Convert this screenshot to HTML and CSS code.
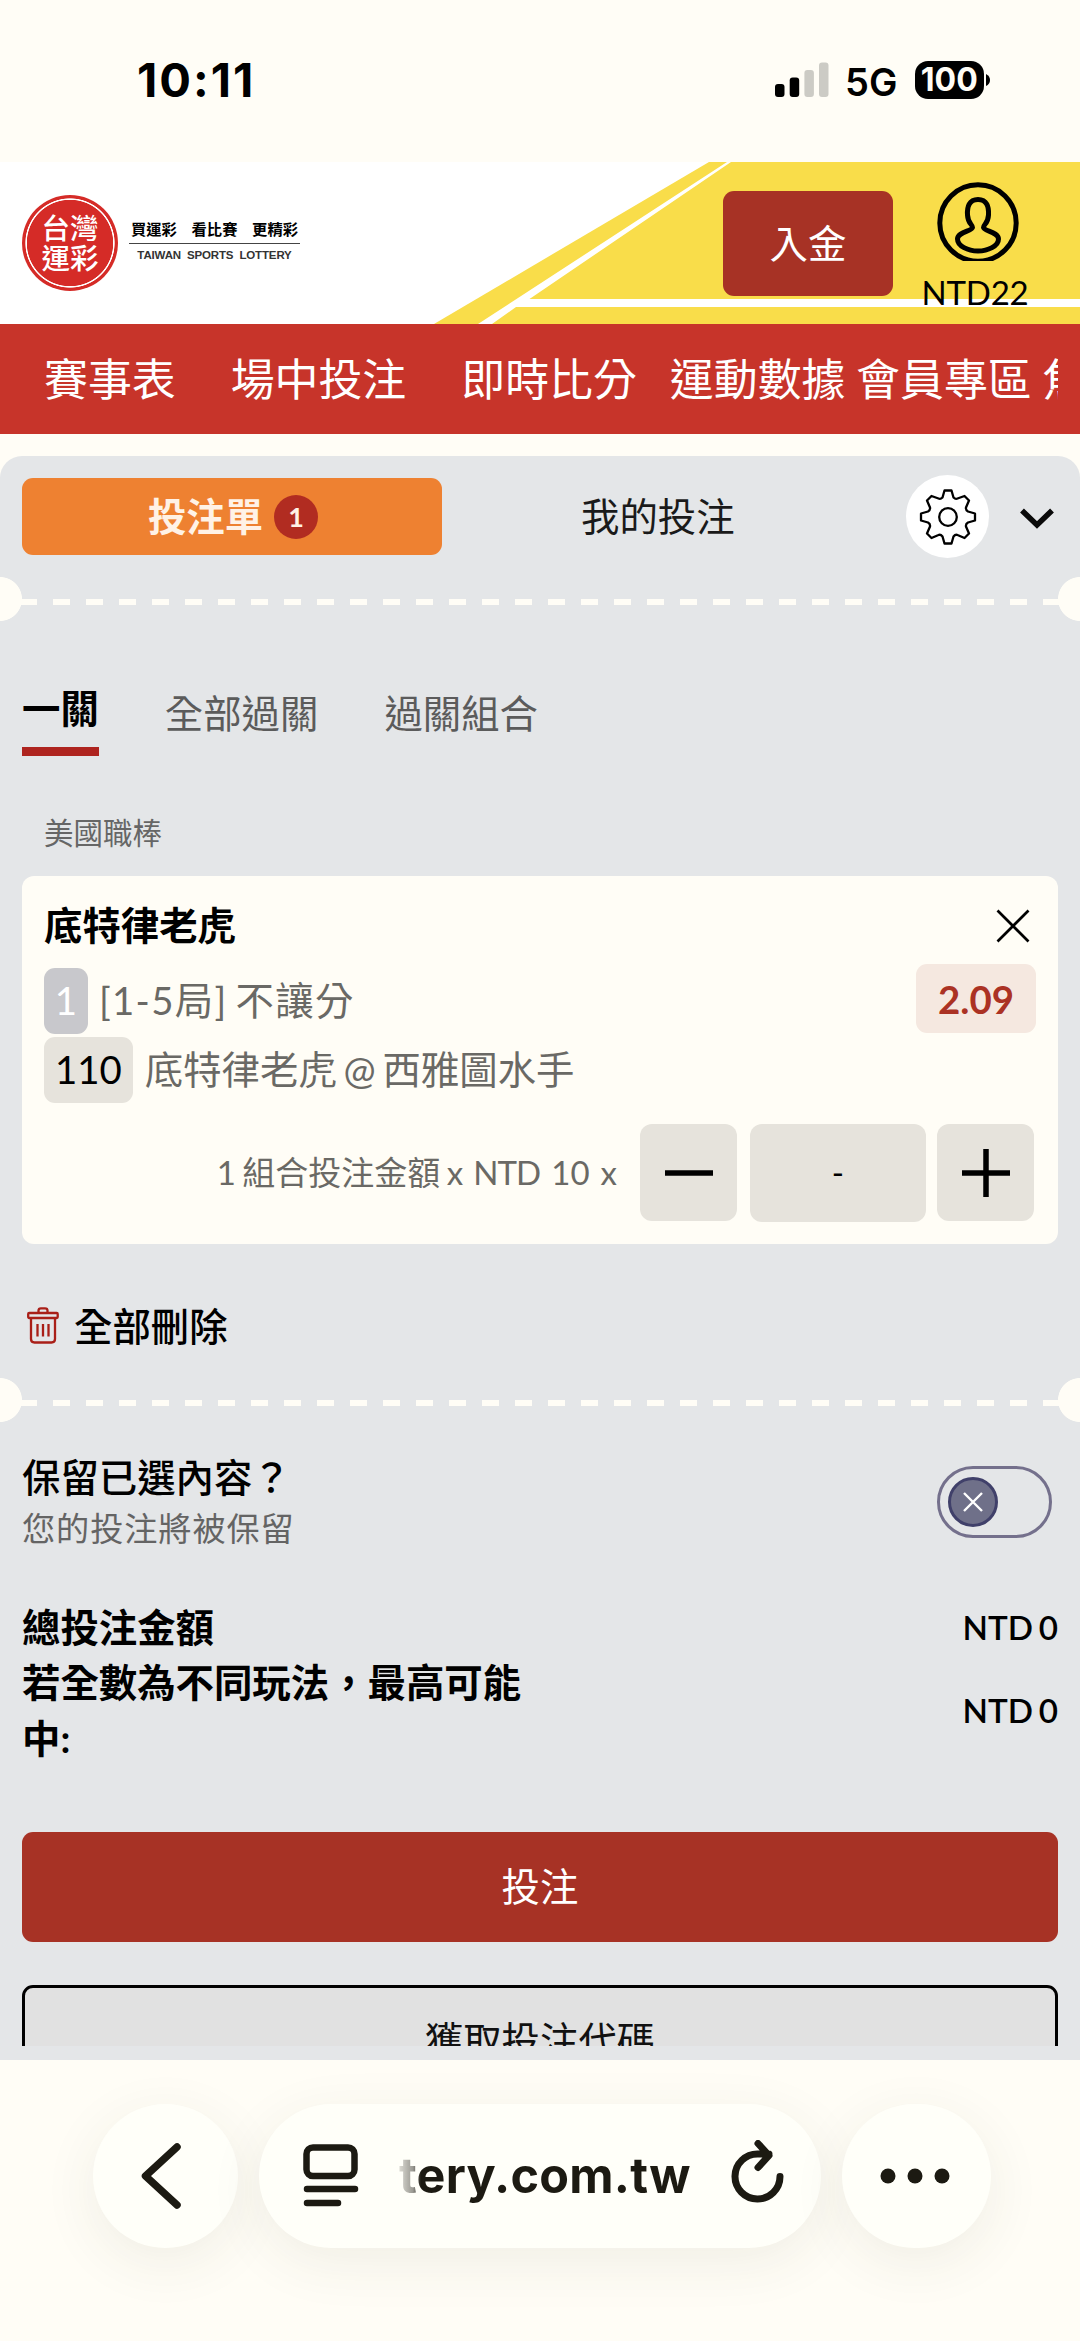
FILE: index.html
```html
<!DOCTYPE html>
<html lang="zh-Hant-TW">
<head>
<meta charset="utf-8">
<title>台灣運彩 投注單</title>
<link rel="stylesheet" href="styles.css">
</head>
<body>
<div class="phone">
  <div class="status">
    <span class="clock">10:11</span>
    <div class="status-right">
      <svg class="signal" width="54" height="36" viewBox="0 0 54 36"><rect x="0" y="22" width="9.5" height="13" rx="3"/><rect x="14.7" y="15.5" width="9.5" height="19.5" rx="3"/><g fill="#cccbc5"><rect x="29.4" y="8" width="9.5" height="27" rx="3"/><rect x="44" y="0.5" width="9.5" height="34.5" rx="3"/></g></svg>
      <span class="net">5G</span>
      <div class="battery"><span class="level">100</span><svg class="nub" width="4" height="12" viewBox="0 0 4 12"><path d="M0 0Q4 2 4 6T0 12Z"/></svg></div>
    </div>
  </div>

  <header class="header">
    <svg class="header-bg" width="1080" height="162" viewBox="0 0 1080 162"><path fill="#f9dd4a" d="M709 0H1080V162H434Z"/><path fill="#fff" d="M727 0H731L529.5 137H1080V145H516L492 162H478Z"/></svg>
    <div class="logo">
      <div class="seal"><span>台灣</span><span>運彩</span></div>
      <div class="slogan"><p class="slogan-zh"><span>買運彩</span><span>看比賽</span><span>更精彩</span></p><p class="slogan-en">TAIWAN SPORTS LOTTERY</p></div>
    </div>
    <button class="deposit">入金</button>
    <div class="account">
      <svg width="82" height="80" viewBox="0 0 82 80" fill="none" stroke="#000" stroke-width="5"><circle cx="41" cy="42" r="38.2"/><path d="M41 18.5C32 18.5 30 26 30.5 34C31 43 35.500 43 35.500 46.500C35.500 50 20.500 51 20.500 58C20.500 65 31 70 41 70S61.500 65 61.500 58C61.500 51 46.500 50 46.500 46.500C46.500 43 51 43 51.500 34C52 26 50 18.5 41 18.5Z"/></svg>
      <span>NTD22</span>
    </div>
  </header>

  <nav class="nav"><a class="wide">賽事表</a><a class="wide">場中投注</a><a class="mid">即時比分</a><a>運動數據</a><a>會員專區</a><a>焦點賽事</a></nav>

  <main class="slip">
    <div class="slip-head">
      <div class="tab-on"><span class="tab-name">投注單</span><span class="count">1</span></div>
      <div class="tab-off">我的投注</div>
      <div class="gear"><svg width="58" height="58" viewBox="-29 -29 58 58" fill="none" stroke="#000" stroke-width="2.3" stroke-linejoin="round"><circle r="8.800"/><path d="M-3.500-26.500H3.500L5.500-19.500Q7.500-17.500 9.500-18.500L16.500-21L21-16.500L18-9.500Q17.500-7 20-5.500L27-3.500V3.500L20 5.500Q17.500 7 18 9.500L21 16.500L16.500 21L9.500 18Q7.500 17 5.500 19.500L3.500 26.500H-3.500L-5.500 19.500Q-7.500 17 -9.500 18L-16.500 21L-21 16.500L-18 9.500Q-17.500 7-20 5.500L-27 3.500V-3.500L-20-5.500Q-17.500-7-18-9.500L-21-16.500L-16.500-21L-9.500-18.500Q-7.500-17.500-5.500-19.500Z"/></svg></div>
      <svg class="fold" width="34" height="22" viewBox="0 0 34 22"><path d="M2 2.500L17 17L32 2.500" fill="none" stroke="#0a0a0a" stroke-width="5.500"/></svg>
    </div>

    <div class="perforation"></div>

    <div class="modes"><div class="mode current">一關</div><div class="mode">全部過關</div><div class="mode">過關組合</div></div>
    <div class="league">美國職棒</div>

    <section class="card">
      <div class="info">
        <div class="picks">
          <div class="pick">底特律老虎</div>
          <div class="line"><span class="tag muted">1</span><span class="market">[1-5局] 不讓分</span></div>
          <div class="line"><span class="tag">110</span><span>底特律老虎 @ 西雅圖水手</span></div>
        </div>
        <div class="side">
          <svg class="close" width="34" height="34" viewBox="0 0 34 34"><path d="M1.500 1.500L32.500 32.500M32.500 1.500L1.500 32.500" stroke="#000" stroke-width="2.700"/></svg>
          <div class="odds">2.09</div>
        </div>
      </div>
      <div class="stake">
        <div class="stake-text"><span>1 組合投注金額 x</span><span class="ntd">NTD</span><span>10</span><span>x</span></div>
        <button class="step"><svg width="50" height="50" viewBox="0 0 50 50"><path d="M1 25H49" stroke="#000" stroke-width="5.500"/></svg></button>
        <div class="amount">-</div>
        <button class="step"><svg width="50" height="50" viewBox="0 0 50 50"><path d="M1 25H49M25 1V49" stroke="#000" stroke-width="5.500"/></svg></button>
      </div>
    </section>

    <div class="clear">
      <svg width="32" height="37" viewBox="0 0 32 37" fill="none" stroke="#a91f18" stroke-width="2.300"><rect x="1.200" y="6" width="29.500" height="5" rx="1"/><path d="M11.500 6V3.500Q11.500 1.300 14 1.300H18Q20.500 1.300 20.500 3.500V6M4 11V32Q4 35.500 7.500 35.500H24.500Q28 35.500 28 32V11M10.500 17V29.500M16 17V29.500M21.500 17V29.500"/></svg>
      <span>全部刪除</span>
    </div>

    <div class="perforation"></div>

    <div class="keep">
      <div><div class="keep-title">保留已選內容？</div><div class="keep-note">您的投注將被保留</div></div>
      <div class="switch"><div class="knob"><svg width="20" height="20" viewBox="0 0 20 20"><path d="M1 1L19 19M19 1L1 19" stroke="#fff" stroke-width="2.400"/></svg></div></div>
    </div>

    <div class="total"><div class="label">總投注金額</div><div class="sum">NTD 0</div></div>
    <div class="total"><div class="label">若全數為不同玩法，最高可能中:</div><div class="sum">NTD 0</div></div>

    <button class="place">投注</button>
    <div class="code-clip"><button class="code">獲取投注代碼</button></div>
  </main>

  <footer class="browser">
    <div class="pill back"><svg width="40" height="66" viewBox="0 0 40 66"><path d="M36 4L4.500 33L36 62" fill="none" stroke="#1c1a12" stroke-width="7.500" stroke-linecap="round" stroke-linejoin="round"/></svg></div>
    <div class="pill address">
      <svg class="page" width="56" height="64" viewBox="0 0 56 64" fill="none" stroke="#1c1a12" stroke-width="6.500" stroke-linecap="round"><rect x="3.500" y="3.500" width="48" height="28.500" rx="6.500"/><path d="M4 45H52M4 59H35"/></svg>
      <span class="url">tery.com.tw</span>
      <svg class="reload" width="54" height="64" viewBox="0 0 54 64" fill="none" stroke="#1c1a12" stroke-width="7" stroke-linecap="round" stroke-linejoin="round"><path d="M49 36.500A22.500 22.500 0 1 1 27 14H38M27 3.500L38 15.500L27 27.500"/></svg>
    </div>
    <div class="pill more"><svg width="70" height="16" viewBox="0 0 70 16" fill="#1c1a12"><circle cx="8" cy="8" r="7.500"/><circle cx="35" cy="8" r="7.500"/><circle cx="62" cy="8" r="7.500"/></svg></div>
  </footer>
</div>
</body>
</html>
```
FILE: styles.css
```css
* { box-sizing: border-box; }
body { margin: 0; background: #fffdf6; color: #000; font-family: Lato, "Noto Sans CJK TC", sans-serif; font-size: 38.400px; }
p { margin: 0; }
svg { display: block; flex: none; }
button { border: 0; padding: 0; font: inherit; }
.phone { width: 1080px; height: 2341px; overflow: hidden; display: flex; flex-direction: column; background: #fffdf6; white-space: nowrap; }

.status { height: 162px; display: flex; justify-content: space-between; padding: 50px 90px 0 137px; font-family: Inter, sans-serif; line-height: 60px; }
.clock { font-size: 47px; font-weight: 700; letter-spacing: 2px; }
.status-right { display: flex; height: 60px; align-items: center; }
.net { font-size: 38px; font-weight: 600; margin-left: 16px; width: 69.500px; padding-top: 4px; }
.battery { display: flex; align-items: center; gap: 2px; }
.level { width: 69.500px; height: 38px; border-radius: 13px; background: #000; color: #fffdf6; font-size: 32px; line-height: 38px; font-weight: 700; text-align: center; }

.header { position: relative; height: 162px; background: #fff; display: flex; align-items: flex-start; }
.header-bg { position: absolute; left: 0; top: 0; }
.logo { position: relative; display: flex; padding: 33px 0 0 22px; width: 723px; }
.seal { width: 96px; height: 96px; border-radius: 50%; background: radial-gradient(circle, #d52b27 42.800px, #fff 43.500px, #fff 44.300px, #d52b27 45px); color: #fff; display: flex; flex-direction: column; align-items: center; justify-content: center; font-size: 28.500px; line-height: 30px; font-weight: 500; }
.slogan { margin: 24px 0 0 11px; width: 171px; }
.slogan-zh { display: flex; justify-content: space-between; padding: 0 2px; height: 25px; border-bottom: 1.500px solid #444; font-size: 15.300px; line-height: 20px; font-weight: 700; }
.slogan-en { font: bold 11.500px/22px "Liberation Sans", sans-serif; color: #333; text-align: center; word-spacing: 3px; letter-spacing: -0.150px; }
.deposit { position: relative; width: 170px; height: 105px; margin-top: 29px; border-radius: 11px; background: #a73225; color: #fff; line-height: 105px; }
.account { position: relative; width: 170px; padding: 19px 0 0 0; margin-left: -3px; display: flex; flex-direction: column; align-items: center; font-size: 33px; line-height: 40px; }
.account svg { margin-left: 5px; }
.account span { margin-top: 11px; letter-spacing: -0.200px; }

.nav { height: 110px; background: #c7342a; color: #fff; display: flex; overflow: hidden; border-right: 22px solid #c7342a; padding-left: 44px; font-size: 43.900px; line-height: 110px; }
.nav a { margin-right: 10.700px; flex: none; }
.nav .wide { margin-right: 55px; }
.nav .mid { margin-right: 33px; }

.slip { margin-top: 22px; height: 1604px; overflow: hidden; background: #e4e6e8; border-radius: 22px 22px 0 0; display: flex; flex-direction: column; flex: none; }
.slip-head { height: 121px; flex: none; display: flex; padding: 19px 25px 0 22px; align-items: flex-start; }
.tab-on { width: 420px; height: 77px; margin-top: 3px; background: #ee8131; border-radius: 11px; color: #fff2e6; font-weight: 700; display: flex; justify-content: center; align-items: center; gap: 11px; padding-left: 2px; }
.tab-name { line-height: 60px; padding-bottom: 2px; }
.count { width: 44px; height: 44px; border-radius: 50%; background: #b12c21; font-size: 27px; line-height: 44px; text-align: center; }
.tab-off { width: 464px; padding-left: 139px; line-height: 82px; color: #1a1a1a; }
.gear { width: 83px; height: 83px; border-radius: 50%; background: #fff; display: flex; align-items: center; justify-content: center; }
.fold { margin: 33px 0 0 31px; }
.perforation { height: 44px; flex: none; background:
  radial-gradient(circle at 0 22px, #fffdf6 21.600px, transparent 22.300px),
  radial-gradient(circle at 1080px 22px, #fffdf6 21.600px, transparent 22.300px),
  repeating-linear-gradient(90deg, #fffdf6 0 16.700px, transparent 16.700px 33px) 20.300px 22px / 1040px 6px no-repeat; }

.modes { display: flex; flex: none; gap: 66px; height: 135px; padding: 59px 22px 0; color: #5b5b5b; line-height: 66px; }
.mode.current { height: 76px; border-bottom: 9px solid #ae241f; line-height: 57px; color: #000; font-weight: 700; }
.league { flex: none; height: 120px; padding: 57px 0 0 44px; font-size: 29.500px; line-height: 40px; color: #666; }

.card { height: 368px; flex: none; margin: 0 22px; border-radius: 12px; background: #fffdf6; padding: 22px 22px 0; color: #6a6965; }
.info { display: flex; justify-content: space-between; height: 226px; }
.pick { height: 70px; line-height: 55px; color: #000; font-weight: 700; }
.line { display: flex; gap: 12px; height: 69px; line-height: 65px; word-spacing: -3px; }
.tag { height: 66px; min-width: 44px; padding: 0 11px; border-radius: 11px; background: #e6e3dc; color: #000; text-align: center; }
.tag.muted { background: #c8c8cc; color: #fff; padding: 0; }
.market { letter-spacing: 1.300px; margin-left: -1px; }
.side { display: flex; flex-direction: column; align-items: flex-end; padding-top: 11px; }
.close { margin-right: 6px; }
.odds { margin-top: 21px; width: 120px; height: 69px; border-radius: 11px; background: #f5e8e0; color: #ab3224; font-weight: 700; text-align: center; line-height: 70px; }
.stake { display: flex; height: 98px; justify-content: flex-end; padding-right: 2px; font-size: 33px; line-height: 97px; }
.stake-text { display: flex; gap: 11px; margin-right: 23px; word-spacing: -2px; }
.stake-text span:first-child { margin-right: -1px; }
.ntd { letter-spacing: -0.900px; }
.step { width: 97px; height: 97px; border-radius: 12px; background: #e6e3dc; display: flex; align-items: center; justify-content: center; }
.amount { width: 176px; height: 98px; margin: 0 11px 0 13px; border-radius: 12px; background: #e6e3dc; color: #000; text-align: center; }

.clear { flex: none; height: 134px; padding: 53px 0 24px 27px; display: flex; gap: 15px; align-items: center; font-weight: 500; line-height: 56px; }

.keep { flex: none; height: 178px; padding: 28px 28px 0 22px; display: flex; justify-content: space-between; }
.keep-title { line-height: 54px; font-weight: 500; }
.keep-note { font-size: 33.200px; line-height: 49px; letter-spacing: 0.900px; color: #646464; }
.switch { margin-top: 16px; width: 115px; height: 72px; border: 3px solid #74708c; border-radius: 36px; padding: 8px; }
.knob { width: 50px; height: 50px; border-radius: 50%; border: 3px solid #40406a; background: #6f7089; display: flex; align-items: center; justify-content: center; }
.total { flex: none; display: flex; justify-content: space-between; align-items: center; padding: 0 22px; line-height: 55.400px; font-weight: 700; }
.label { width: 510px; white-space: normal; }
.sum { font-size: 33.200px; font-weight: 600; word-spacing: -2.500px; }
.place { flex: none; height: 110px; margin: 66px 22px 0; border-radius: 11px; background: #a73225; color: #fff; line-height: 106px; padding-bottom: 3px; }
.code-clip { flex: none; height: 61px; margin: 43px 22px 0; overflow: hidden; }
.code { width: 100%; height: 110px; border: 3px solid #000; border-radius: 11px; background: #e1e1e1; color: #111; padding-bottom: 4px; }

.browser { flex: none; height: 281px; padding: 44px 89px 0 93px; display: flex; justify-content: space-between; }
.pill { height: 144px; border-radius: 72px; background: #fffff9; box-shadow: 0 14px 55px rgba(60, 60, 40, 0.08); display: flex; align-items: center; }
.back { width: 145px; padding-left: 48px; }
.address { width: 562px; padding: 0 36px 0 44px; }
.more { width: 149px; padding-left: 38px; }
.url { margin-left: 40px; width: 296px; font: 700 48.500px/60px Inter, sans-serif; letter-spacing: 0.250px; color: transparent; background: linear-gradient(90deg, #dddcd5 0, #9a9992 14px, #1c1a12 22px); -webkit-background-clip: text; background-clip: text; }
.reload { margin: -9px 0 0 36px; }
```
